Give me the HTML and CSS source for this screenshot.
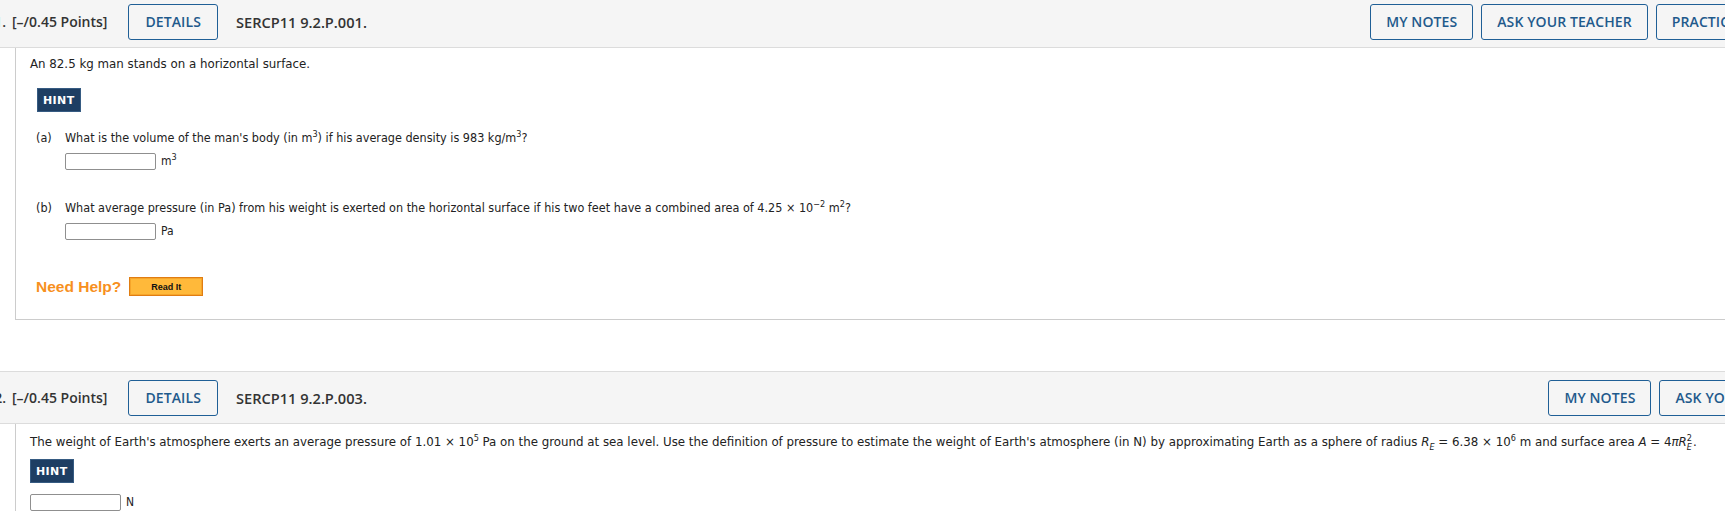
FILE: index.html
```html
<!DOCTYPE html>
<html>
<head>
<meta charset="utf-8">
<link rel="stylesheet" href="styles.css">
</head>
<body>
<div class="page">
  <section class="question q1">
    <div class="qhead">
      <span class="qnum">1.</span>
      <span class="points">[–/0.45 Points]</span>
      <button class="btn">DETAILS</button>
      <span class="qid">SERCP11 9.2.P.001.</span>
      <div class="actions">
        <button class="btn">MY NOTES</button>
        <button class="btn">ASK YOUR TEACHER</button>
        <button class="btn">PRACTICE ANOTHER</button>
      </div>
    </div>
    <div class="qbody">
      <p class="stem">An 82.5 kg man stands on a horizontal surface.</p>
      <div class="hint-row"><span class="hint">HINT</span></div>
      <div class="part">
        <div class="part-q"><span class="plabel">(a)</span><span>What is the volume of the man's body (in m<sup>3</sup>) if his average density is 983 kg/m<sup>3</sup>?</span></div>
        <div class="answer"><span class="inp"></span><span class="unit">m<sup>3</sup></span></div>
      </div>
      <div class="part">
        <div class="part-q"><span class="plabel">(b)</span><span>What average pressure (in Pa) from his weight is exerted on the horizontal surface if his two feet have a combined area of 4.25 × 10<sup>−2</sup> m<sup>2</sup>?</span></div>
        <div class="answer"><span class="inp"></span><span class="unit">Pa</span></div>
      </div>
      <div class="help">
        <span class="need">Need Help?</span>
        <span class="readit">Read It</span>
      </div>
    </div>
  </section>

  <section class="question q2">
    <div class="qhead">
      <span class="qnum">2.</span>
      <span class="points">[–/0.45 Points]</span>
      <button class="btn">DETAILS</button>
      <span class="qid">SERCP11 9.2.P.003.</span>
      <div class="actions">
        <button class="btn">MY NOTES</button>
        <button class="btn">ASK YOUR TEACHER</button>
      </div>
    </div>
    <div class="qbody">
      <p class="stem">The weight of Earth's atmosphere exerts an average pressure of 1.01 × 10<sup>5</sup> Pa on the ground at sea level. Use the definition of pressure to estimate the weight of Earth's atmosphere (in N) by approximating Earth as a sphere of radius <i>R</i><sub><i>E</i></sub> = 6.38 × 10<sup>6</sup> m and surface area <i>A</i> = 4<i>π</i><i>R</i><span class="supsub"><span>2</span><span><i>E</i></span></span>.</p>
      <div class="hint-row"><span class="hint">HINT</span></div>
      <div class="answer"><span class="inp"></span><span class="unit">N</span></div>
    </div>
  </section>
</div>
</body>
</html>
```

FILE: styles.css
```css
html, body {
  margin: 0;
  padding: 0;
  overflow: hidden;
  background: #ffffff;
}
body {
  font-family: "DejaVu Sans Condensed", "DejaVu Sans", sans-serif;
  color: #222;
}
.page {
  width: 1860px;
  margin-left: -14px;
  margin-top: -5px;
}
.question {
  margin-bottom: 51px;
}
.qhead {
  display: flex;
  align-items: center;
  height: 51px;
  background: #f5f5f5;
  border-top: 1px solid #dcdcdc;
  border-bottom: 1px solid #dcdcdc;
  padding: 0 22px 0 0;
  font-family: "Open Sans", sans-serif;
  font-weight: 600;
  font-size: 14px;
  color: #333;
}
.qnum {
  width: 20px;
  text-align: right;
  margin-right: 6px;
}
.points {
  margin-right: 21px;
}
.btn {
  font-family: "Open Sans", sans-serif;
  font-weight: 600;
  font-size: 14px;
  color: #1f5a8c;
  background: #f5f5f5;
  border: 1px solid #1f5f96;
  border-radius: 3px;
  height: 36px;
  padding: 0 15px;
  letter-spacing: 0.1px;
}
.qhead > .btn {
  padding: 0 16px;
}
.qid {
  margin-left: 18px;
  font-size: 14.6px;
}
.actions {
  margin-left: auto;
  display: flex;
  gap: 8px;
}
.q2 .actions {
  margin-right: -2px;
}
.qbody {
  margin-left: 29px;
  border-left: 1px solid #cccccc;
  padding: 8px 0 0 14px;
}
.q1 .qbody {
  border-bottom: 1px solid #cccccc;
  padding-bottom: 23px;
}
.stem {
  margin: 0;
  font-size: 13.15px;
  line-height: 16px;
}
.stem sup, .part-q sup, .unit sup {
  font-size: 9px;
  line-height: 0;
  vertical-align: 5px;
}
.stem sub {
  font-size: 9px;
  line-height: 0;
  vertical-align: -4px;
}
.supsub {
  display: inline-flex;
  flex-direction: column;
  font-size: 9px;
  line-height: 9px;
  vertical-align: 5px;
  margin-right: 1px;
}
.hint-row {
  margin-top: 16px;
  display: flex;
}
.hint {
  background: #1e3e63;
  color: #ffffff;
  font-family: "DejaVu Sans", sans-serif;
  font-weight: bold;
  font-size: 11px;
  letter-spacing: 0.4px;
  padding: 5px 5px 4px 5px;
  border: 1px solid #365b82;
}
.q1 .hint-row {
  margin-left: 7px;
}
.part {
  margin-left: 6px;
  margin-top: 18px;
}
.part + .part {
  margin-top: 30px;
}
.part-q {
  display: flex;
  font-size: 12.5px;
  line-height: 16px;
}
.plabel {
  width: 29px;
}
.answer {
  display: flex;
  align-items: flex-start;
  margin-top: 7px;
}
.part .answer {
  margin-left: 29px;
}
.inp {
  width: 89px;
  height: 15px;
  border: 1px solid #8f8f8f;
  border-radius: 2px;
  background: #fff;
}
.unit {
  margin-left: 5px;
  font-size: 12px;
  line-height: 16px;
}
.help {
  display: flex;
  align-items: center;
  margin-top: 37px;
  margin-left: 6px;
}
.need {
  font-family: "Liberation Sans", Arial, sans-serif;
  font-weight: bold;
  font-size: 15.5px;
  color: #f7901e;
}
.readit {
  margin-left: 8px;
  width: 72px;
  height: 17px;
  border: 1px solid #e07d12;
  background: #ffb93a;
  box-shadow: inset 0 0 0 1px #f6a52a;
  font-family: "Liberation Sans", Arial, sans-serif;
  font-weight: bold;
  font-size: 9px;
  color: #111;
  display: flex;
  align-items: center;
  justify-content: center;
}
.q2 .qbody {
  padding-top: 10px;
}
.q2 .hint-row {
  margin-top: 7px;
}
.q2 .answer {
  margin-top: 11px;
}
```
